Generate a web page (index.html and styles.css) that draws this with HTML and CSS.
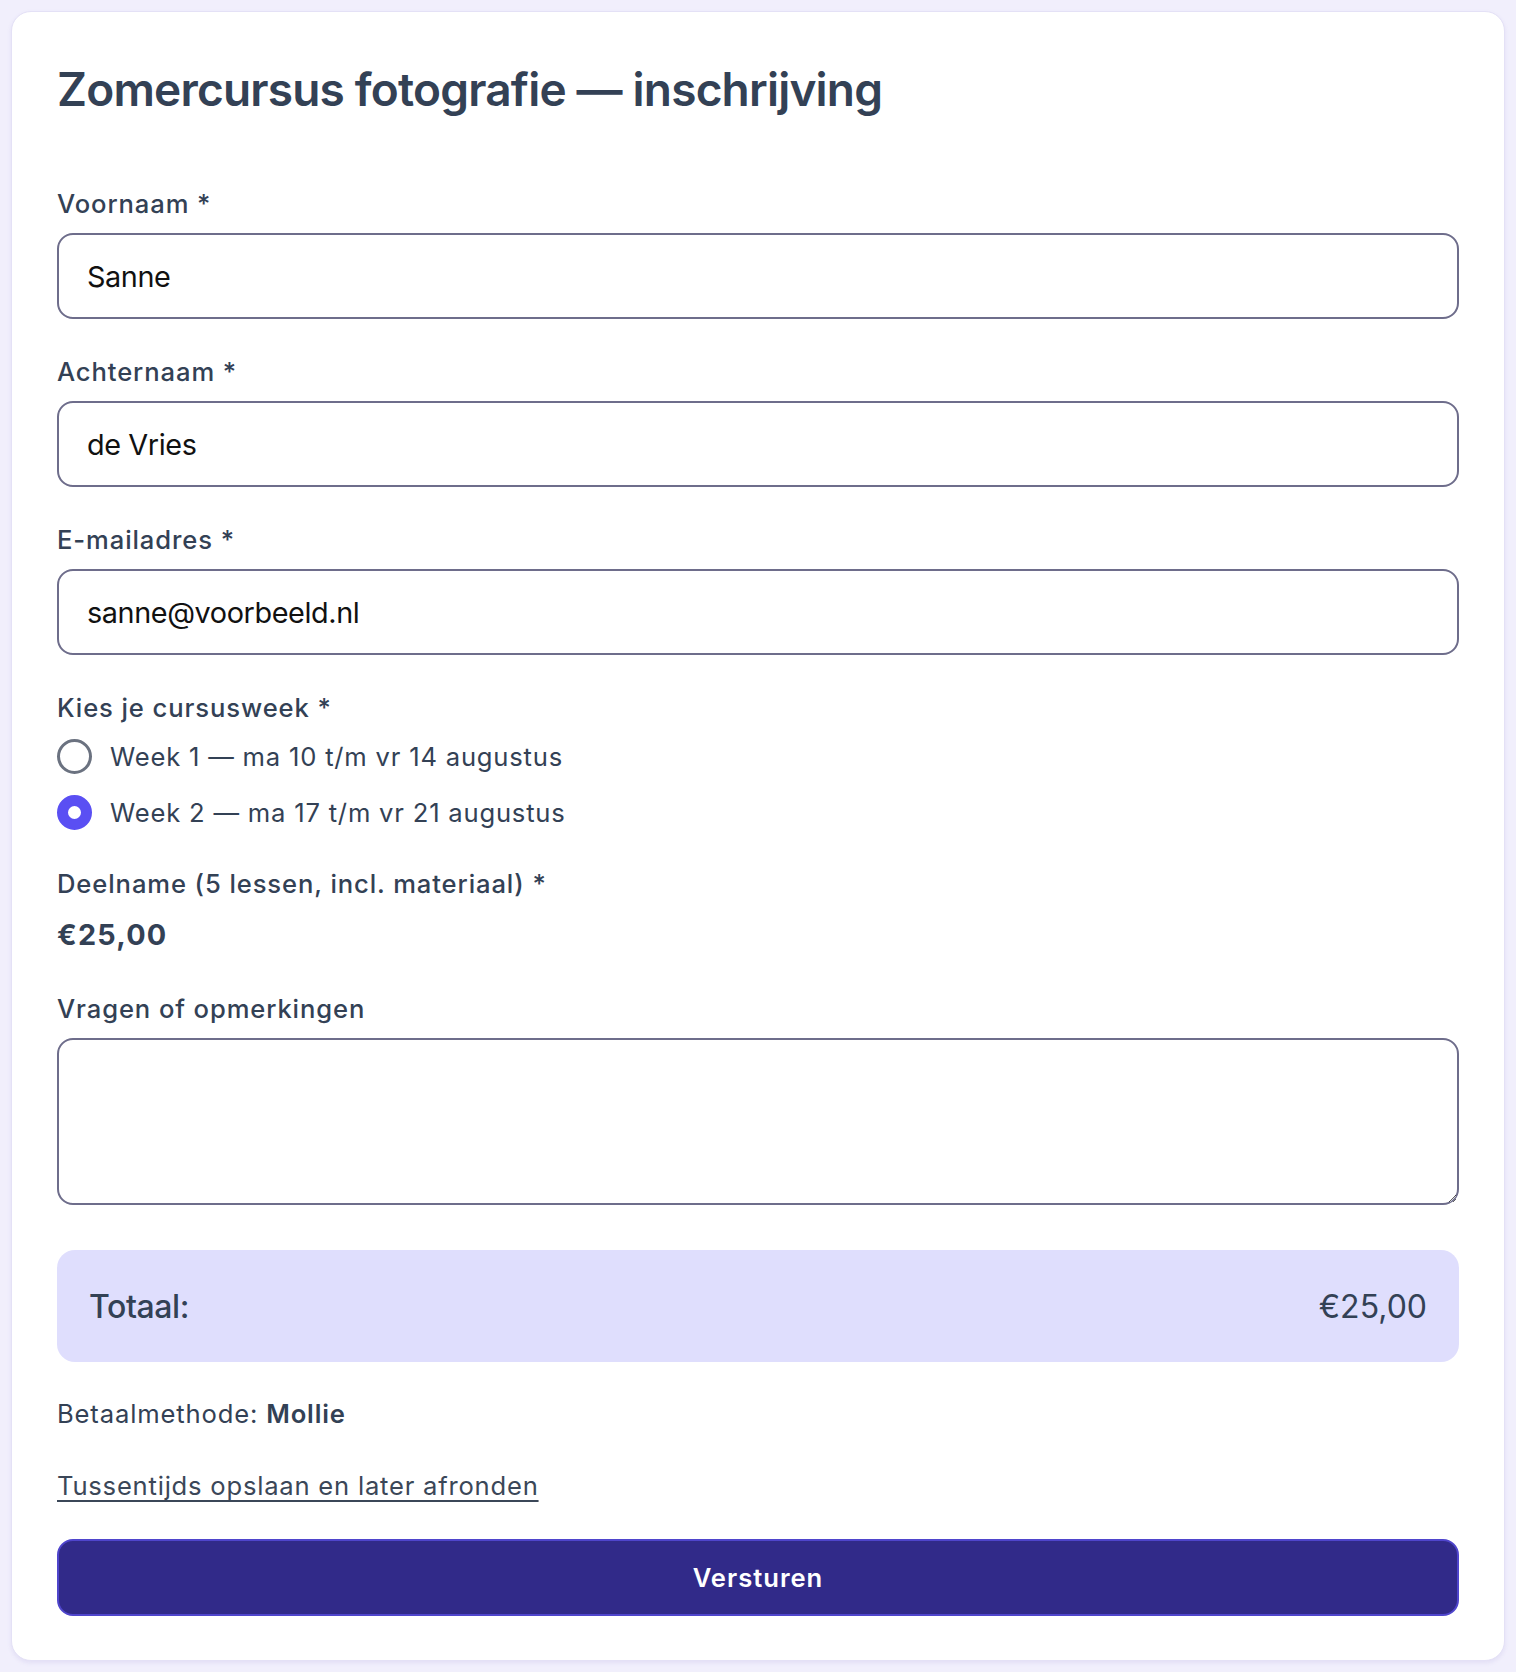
FILE: index.html
```html
<!DOCTYPE html>
<html lang="nl">
<head>
<meta charset="utf-8">
<title>Zomercursus fotografie — inschrijving</title>
<link rel="stylesheet" href="styles.css">
</head>
<body>
<main class="page">
  <form class="card">
    <h1 class="title">Zomercursus fotografie — inschrijving</h1>

    <div class="field">
      <label class="label" for="voornaam">Voornaam *</label>
      <input class="input" id="voornaam" type="text" value="Sanne">
    </div>

    <div class="field">
      <label class="label" for="achternaam">Achternaam *</label>
      <input class="input" id="achternaam" type="text" value="de Vries">
    </div>

    <div class="field">
      <label class="label" for="email">E-mailadres *</label>
      <input class="input" id="email" type="email" value="sanne@voorbeeld.nl">
    </div>

    <div class="group group-radios">
      <div class="label">Kies je cursusweek *</div>
      <div class="radios">
        <label class="radio-row"><input class="radio" type="radio" name="week"><span>Week 1 — ma 10 t/m vr 14 augustus</span></label>
        <label class="radio-row"><input class="radio" type="radio" name="week" checked><span>Week 2 — ma 17 t/m vr 21 augustus</span></label>
      </div>
    </div>

    <div class="group">
      <div class="label">Deelname (5 lessen, incl. materiaal) *</div>
      <div class="price">€25,00</div>
    </div>

    <div class="field">
      <label class="label" for="vragen">Vragen of opmerkingen</label>
      <textarea class="textarea" id="vragen"></textarea>
    </div>

    <div class="total">
      <span class="total-label">Totaal:</span>
      <span class="total-amount">€25,00</span>
    </div>

    <p class="method">Betaalmethode: <strong>Mollie</strong></p>

    <p class="save"><a href="#" class="save-link">Tussentijds opslaan en later afronden</a></p>

    <button type="button" class="submit">Versturen</button>
  </form>
</main>
</body>
</html>
```

FILE: styles.css
```css
* {
  box-sizing: border-box;
}

html, body {
  margin: 0;
  padding: 0;
  background: #f1effc;
}

body {
  font-family: Inter, "Noto Sans", "Liberation Sans", sans-serif;
  color: #334155;
}

.page {
  padding: 11px 11px 13px;
}

.card {
  background: #ffffff;
  border: 1px solid #e4e1f6;
  border-radius: 20px;
  box-shadow: 0 2px 4px rgba(120, 110, 200, 0.12);
  padding: 45px 45px 44px;
  display: flex;
  flex-direction: column;
}

.title {
  margin: 5px 0 68px;
  font-size: 46px;
  line-height: 55px;
  font-weight: 600;
  color: #334155;
  letter-spacing: -0.8px;
}

.field {
  display: flex;
  flex-direction: column;
  margin-bottom: 34px;
}

.label {
  display: block;
  font-size: 25.6px;
  line-height: 38px;
  font-weight: 500;
  color: #334155;
  margin-bottom: 10px;
  letter-spacing: 0.9px;
}

.input {
  height: 86px;
  width: 100%;
  border: 2px solid #6e6d8b;
  border-radius: 16px;
  padding: 0 28px;
  font-family: inherit;
  font-size: 28.8px;
  letter-spacing: -0.4px;
  color: #111111;
  background: #ffffff;
  outline: none;
}

.textarea {
  height: 167px;
  width: 100%;
  border: 2px solid #6e6d8b;
  border-radius: 16px;
  padding: 20px 28px;
  font-family: inherit;
  font-size: 28.8px;
  color: #111111;
  background: #ffffff;
  resize: vertical;
  outline: none;
}

.group {
  display: flex;
  flex-direction: column;
  margin-bottom: 34px;
}

.group-radios {
  margin-bottom: 31px;
}

.group .label {
  margin-bottom: 7px;
}

.radios {
  display: flex;
  flex-direction: column;
  gap: 12px;
}

.radio-row {
  display: flex;
  align-items: center;
  gap: 18px;
  height: 44px;
  font-size: 25.6px;
  letter-spacing: 0.8px;
  color: #334155;
  cursor: pointer;
}

.radio {
  appearance: none;
  -webkit-appearance: none;
  margin: 0;
  width: 35px;
  height: 35px;
  border-radius: 50%;
  border: 3.5px solid #6b7280;
  background: #ffffff;
  flex: none;
}

.radio:checked {
  border: 11px solid #5a4ff3;
  background: #ffffff;
}

.price {
  font-size: 28.8px;
  line-height: 43px;
  font-weight: 700;
  letter-spacing: 1.2px;
  color: #334155;
  margin-top: 3px;
}

.total {
  display: flex;
  justify-content: space-between;
  align-items: center;
  height: 112px;
  padding: 0 32px;
  margin-top: 11px;
  background: #dfdefd;
  border-radius: 18px;
  font-size: 32px;
  color: #334155;
}

.total-label {
  font-weight: 500;
  letter-spacing: -0.4px;
}

.total-amount {
  font-weight: 400;
}

.method {
  margin: 33px 0 0;
  font-size: 25.6px;
  line-height: 38px;
  letter-spacing: 0.85px;
  color: #334155;
}

.method strong {
  font-weight: 600;
}

.save {
  margin: 34px 0 0;
  font-size: 25.6px;
  line-height: 38px;
  letter-spacing: 0.78px;
}

.save-link {
  color: #3b4758;
  text-decoration: underline;
  text-underline-offset: 5px;
  text-decoration-thickness: 2px;
}

.submit {
  margin-top: 34px;
  height: 77px;
  width: 100%;
  background: #312a89;
  border: 2px solid #4f45cc;
  border-radius: 16px;
  color: #ffffff;
  font-family: inherit;
  font-size: 25.6px;
  font-weight: 600;
  letter-spacing: 1px;
  cursor: pointer;
}
```
